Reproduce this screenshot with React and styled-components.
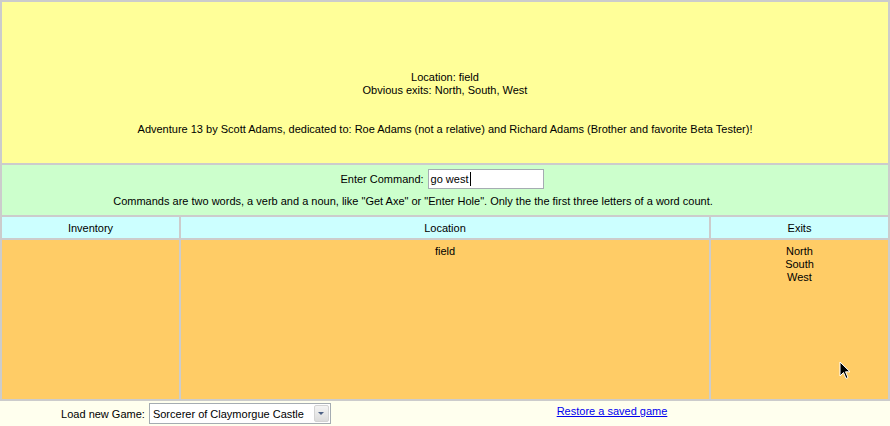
import React from 'react';
import styled, { createGlobalStyle } from 'styled-components';

const GlobalStyle = createGlobalStyle`
  html, body {
    margin: 0;
    padding: 0;
    background-color: #ffffee;
  }
  body {
    font-family: "Liberation Sans", Arial, sans-serif;
    font-size: 11px;
    color: #000;
  }
`;

const Page = styled.div`
  position: relative;
  width: 890px;
  height: 426px;
  overflow: hidden;
`;

const Board = styled.div`
  display: grid;
  grid-template-columns: 177px 1fr 177px;
  gap: 2px;
  padding: 2px;
  background-color: #cccccc;
`;

const Cell = styled.div`
  grid-column: ${(p) => p.span || 'auto'};
  background-color: ${(p) => p.bg};
  text-align: center;
  line-height: 13px;
`;

const Story = styled(Cell)`
  height: 161px;
  box-sizing: border-box;
  padding-top: 69px;
`;

const Spacer = styled.div`
  height: 26px;
`;

const CommandCell = styled(Cell)`
  height: 50px;
  box-sizing: border-box;
  padding-top: 4px;
`;

const CommandRow = styled.div`
  display: flex;
  justify-content: center;
  align-items: center;
  gap: 4px;
  height: 20px;
  padding-right: 6px;
`;

const FakeInput = styled.div`
  display: flex;
  align-items: center;
  width: 116px;
  height: 20px;
  box-sizing: border-box;
  padding: 0 2px;
  background: #fff;
  border: 1px solid #a5acb2;
  text-align: left;
`;

const Caret = styled.span`
  display: inline-block;
  width: 1px;
  height: 14px;
  margin-left: 1px;
  background: #000;
`;

const Hint = styled.div`
  margin-top: 6px;
  padding-right: 64px;
`;

const HeadCell = styled(Cell)`
  height: 21px;
  line-height: 22px;
`;

const ListCell = styled(Cell)`
  height: 159px;
  box-sizing: border-box;
  padding-top: 5px;
`;

const Footer = styled.div`
  display: grid;
  grid-template-columns: 392px 440px;
  align-items: start;
`;

const LoadGame = styled.div`
  display: flex;
  justify-content: center;
  align-items: center;
  gap: 4px;
  padding-top: 2px;
`;

const Select = styled.div`
  display: flex;
  align-items: center;
  width: 182px;
  height: 21px;
  box-sizing: border-box;
  border: 1px solid #a5acb2;
  background: #fff;
  padding: 1px;
`;

const SelectText = styled.span`
  flex: 1;
  padding-left: 2px;
  text-align: left;
  white-space: nowrap;
`;

const DropButton = styled.span`
  display: flex;
  align-items: center;
  justify-content: center;
  width: 15px;
  height: 17px;
  box-sizing: border-box;
  border: 1px solid #d4d4d4;
  border-radius: 2px;
  background: linear-gradient(#f4f4f4, #dcdcdc);
`;

const Arrow = styled.span`
  width: 0;
  height: 0;
  border-left: 3px solid transparent;
  border-right: 3px solid transparent;
  border-top: 3px solid #4d6185;
`;

const RestoreLink = styled.a`
  display: block;
  padding-top: 4px;
  line-height: 13px;
  text-align: center;
  color: #0000ee;
  text-decoration: underline;
  cursor: pointer;
`;

const Pointer = styled.svg`
  position: absolute;
  left: 839px;
  top: 361px;
`;

function App() {
  return (
    <Page>
      <GlobalStyle />
      <Board>
        <Story span="1 / 4" bg="#ffff99">
          <div>Location: field</div>
          <div>Obvious exits: North, South, West</div>
          <Spacer />
          <div>
            Adventure 13 by Scott Adams, dedicated to: Roe Adams (not a relative) and Richard Adams
            (Brother and favorite Beta Tester)!
          </div>
        </Story>
        <CommandCell span="1 / 4" bg="#ccffcc">
          <CommandRow>
            <span>Enter Command:</span>
            <FakeInput>
              go west<Caret />
            </FakeInput>
          </CommandRow>
          <Hint>
            Commands are two words, a verb and a noun, like "Get Axe" or "Enter Hole". Only the the
            first three letters of a word count.
          </Hint>
        </CommandCell>
        <HeadCell bg="#ccffff">Inventory</HeadCell>
        <HeadCell bg="#ccffff">Location</HeadCell>
        <HeadCell bg="#ccffff">Exits</HeadCell>
        <ListCell bg="#ffcc66" />
        <ListCell bg="#ffcc66">field</ListCell>
        <ListCell bg="#ffcc66">
          <div>North</div>
          <div>South</div>
          <div>West</div>
        </ListCell>
      </Board>
      <Footer>
        <LoadGame>
          <span>Load new Game:</span>
          <Select>
            <SelectText>Sorcerer of Claymorgue Castle</SelectText>
            <DropButton>
              <Arrow />
            </DropButton>
          </Select>
        </LoadGame>
        <RestoreLink>Restore a saved game</RestoreLink>
      </Footer>
      <Pointer width="13" height="20" viewBox="0 0 13 20">
        <path
          d="M1 1 L1 15 L4.5 11.5 L7 17.5 L9 16.5 L6.5 10.8 L11 10.8 Z"
          fill="#000"
          stroke="#fff"
          strokeWidth="1"
        />
      </Pointer>
    </Page>
  );
}

export default App;
